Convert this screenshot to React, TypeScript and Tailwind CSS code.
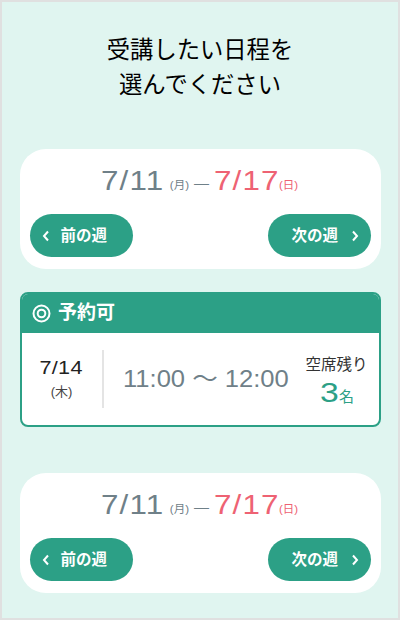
const jp = `font-['Liberation_Sans','Noto_Sans_CJK_JP',sans-serif]`;

function WeekButton({ label, dir }: { label: string; dir: "prev" | "next" }) {
  return (
    <button className="flex h-[43px] w-[103px] items-center rounded-full bg-[#2ca086] text-[15.5px] font-bold text-white">
      {dir === "prev" && (
        <svg width="8" height="12" viewBox="0 0 8 12" className="ml-[12px] mr-[11px]">
          <path d="M6 1.5 2 6l4 4.5" fill="none" stroke="white" strokeWidth="2" />
        </svg>
      )}
      <span className={dir === "next" ? "ml-[24px] mr-[13px]" : ""}>{label}</span>
      {dir === "next" && (
        <svg width="8" height="12" viewBox="0 0 8 12">
          <path d="M2 1.5 6 6l-4 4.5" fill="none" stroke="white" strokeWidth="2" />
        </svg>
      )}
    </button>
  );
}

function WeekCard() {
  return (
    <div className="flex h-[120px] flex-col rounded-[26px] bg-white px-[10px] pt-[13px]">
      <div className="flex h-[38px] items-center justify-center pr-[1px]">
        <span className="inline-block w-[63px] origin-left scale-x-[1.14] whitespace-nowrap text-[27.5px] leading-none tracking-[1px] text-[#6f8088]">7/11</span>
        <span className="ml-[6px] mt-[9px] text-[11.5px] text-[#6f8088]">(月)</span>
        <span className="mx-[5px] mt-[4px] text-[15px] text-[#6f8088]">—</span>
        <span className="inline-block w-[64px] origin-left scale-x-[1.14] whitespace-nowrap text-[27.5px] leading-none tracking-[1px] text-[#ee6273]">7/17</span>
        <span className="ml-[1px] mt-[9px] text-[11.5px] text-[#ee6273]">(日)</span>
      </div>
      <div className="mt-[14px] flex justify-between">
        <WeekButton label="前の週" dir="prev" />
        <WeekButton label="次の週" dir="next" />
      </div>
    </div>
  );
}

export default function App() {
  return (
    <div className={`${jp} h-[620px] w-[400px] border-2 border-[#e0e0e0] bg-[#e0f5f0] px-[17.5px] text-[#222]`}>
      <h1 className="mt-[31px] text-center text-[23.3px] leading-[35px] text-black">
        受講したい日程を
        <br />
        選んでください
      </h1>
      <div className="mt-[46px]">
        <WeekCard />
      </div>
      <div className="mt-[23px] h-[135px] overflow-hidden rounded-[8px] border-[2.5px] border-[#2ca086] bg-white">
        <div className="flex h-[39px] items-center bg-[#2ca086] pl-[10.5px] text-[19px] font-bold text-white">
          <svg width="19" height="19" viewBox="0 0 19 19" className="mr-[7px]">
            <circle cx="9.5" cy="9.5" r="8" fill="none" stroke="white" strokeWidth="2" />
            <circle cx="9.5" cy="9.5" r="3.8" fill="none" stroke="white" strokeWidth="2" />
          </svg>
          予約可
        </div>
        <div className="flex h-[92px] items-center">
          <div className="flex h-[58px] w-[82px] shrink-0 flex-col items-center justify-center border-r-2 border-[#e4e4e4]">
            <span className="scale-x-[1.2] whitespace-nowrap text-[18px] leading-[25px] tracking-[0.3px] text-[#222]">7/14</span>
            <span className="text-[13px] leading-[21px] text-[#444]">(木)</span>
          </div>
          <div className="ml-[19px] w-[183px] shrink-0 origin-left scale-x-[1.065] whitespace-nowrap text-[24px] text-[#6f8088]">11:00 ～ 12:00</div>
          <div className="mt-[8px] flex flex-col items-center whitespace-nowrap">
            <span className="text-[15.5px] leading-[20px] text-[#333]">空席残り</span>
            <span className="mt-[3px] flex items-baseline pl-[1px] leading-[30px] text-[#2ca086]">
              <span className="inline-block w-[19px] origin-left scale-x-[1.25] text-[27px]">3</span>
              <span className="text-[15px]">名</span>
            </span>
          </div>
        </div>
      </div>
      <div className="mt-[46px]">
        <WeekCard />
      </div>
    </div>
  );
}
